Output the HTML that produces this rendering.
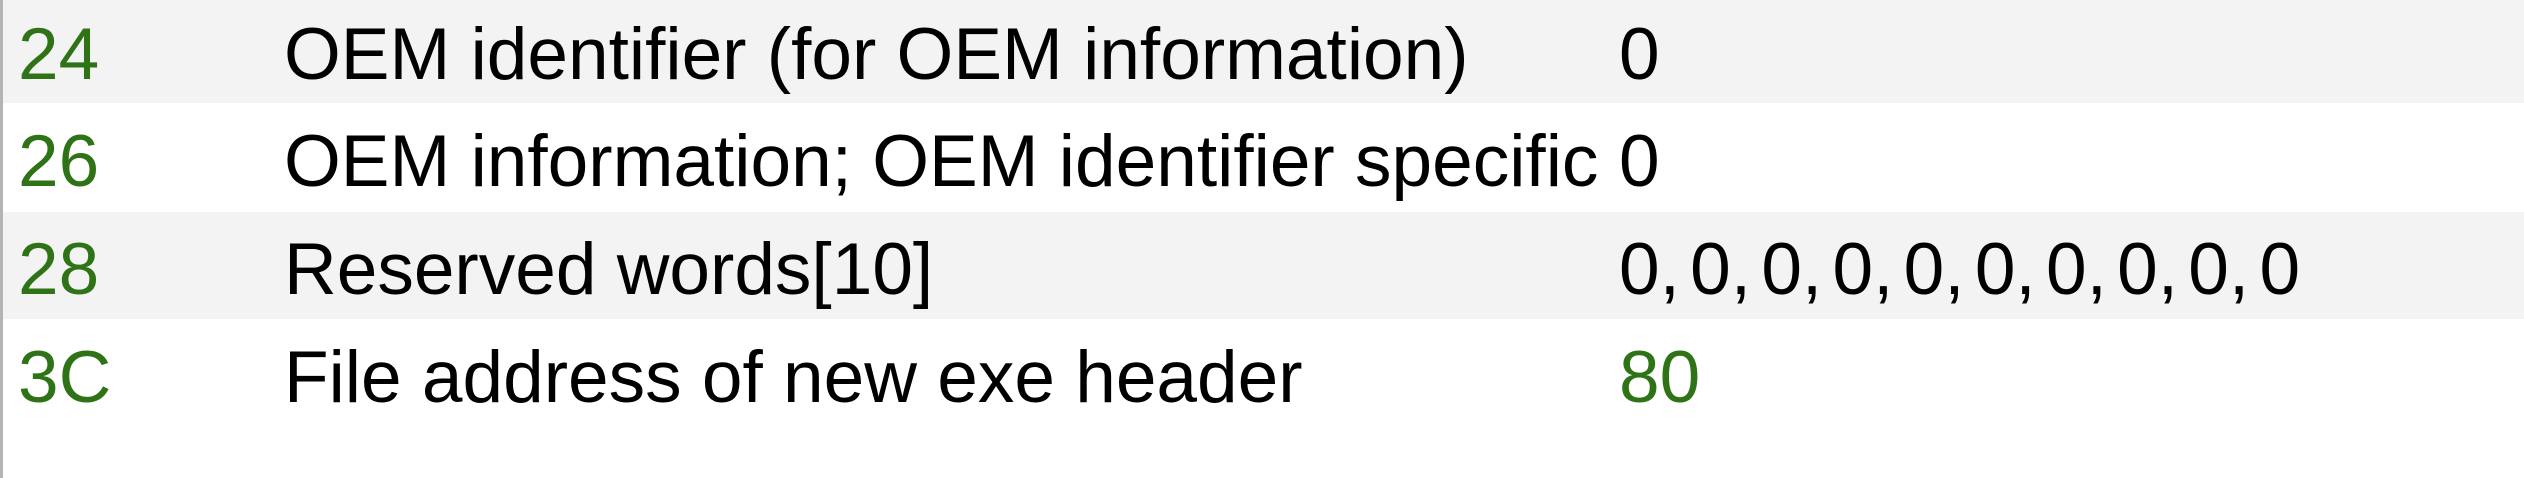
<!DOCTYPE html>
<html><head><style>
html,body{margin:0;padding:0}
body{width:2524px;height:478px;overflow:hidden;background:#fff;position:relative;font-family:"Liberation Sans",sans-serif;font-size:73px;color:#000}
.bl{position:absolute;left:0;top:0;width:3px;height:478px;background:#b4b4b4}
.row{position:absolute;left:3px;width:2521px}
.g{background:#f3f3f3}
.t{position:absolute;white-space:nowrap;line-height:1}
.n{color:#2f7317}
</style></head><body>
<div class="row g" style="top:0;height:103px"></div>
<div class="row" style="top:103px;height:109px"></div>
<div class="row g" style="top:212px;height:107px"></div>
<div class="bl"></div>
<div class="t n" style="left:18px;top:18px">24</div>
<div class="t" style="left:284px;top:18px">OEM identifier (for OEM information)</div>
<div class="t" style="left:1619px;top:18px">0</div>
<div class="t n" style="left:18px;top:125px">26</div>
<div class="t" style="left:284px;top:125px">OEM information; OEM identifier specific</div>
<div class="t" style="left:1619px;top:125px">0</div>
<div class="t n" style="left:18px;top:233px">28</div>
<div class="t" style="left:284px;top:233px">Reserved words[10]</div>
<div class="t" style="left:1619px;top:233px;word-spacing:-10px">0, 0, 0, 0, 0, 0, 0, 0, 0, 0</div>
<div class="t n" style="left:18px;top:341px">3C</div>
<div class="t" style="left:284px;top:341px">File address of new exe header</div>
<div class="t n" style="left:1619px;top:341px">80</div>
</body></html>
